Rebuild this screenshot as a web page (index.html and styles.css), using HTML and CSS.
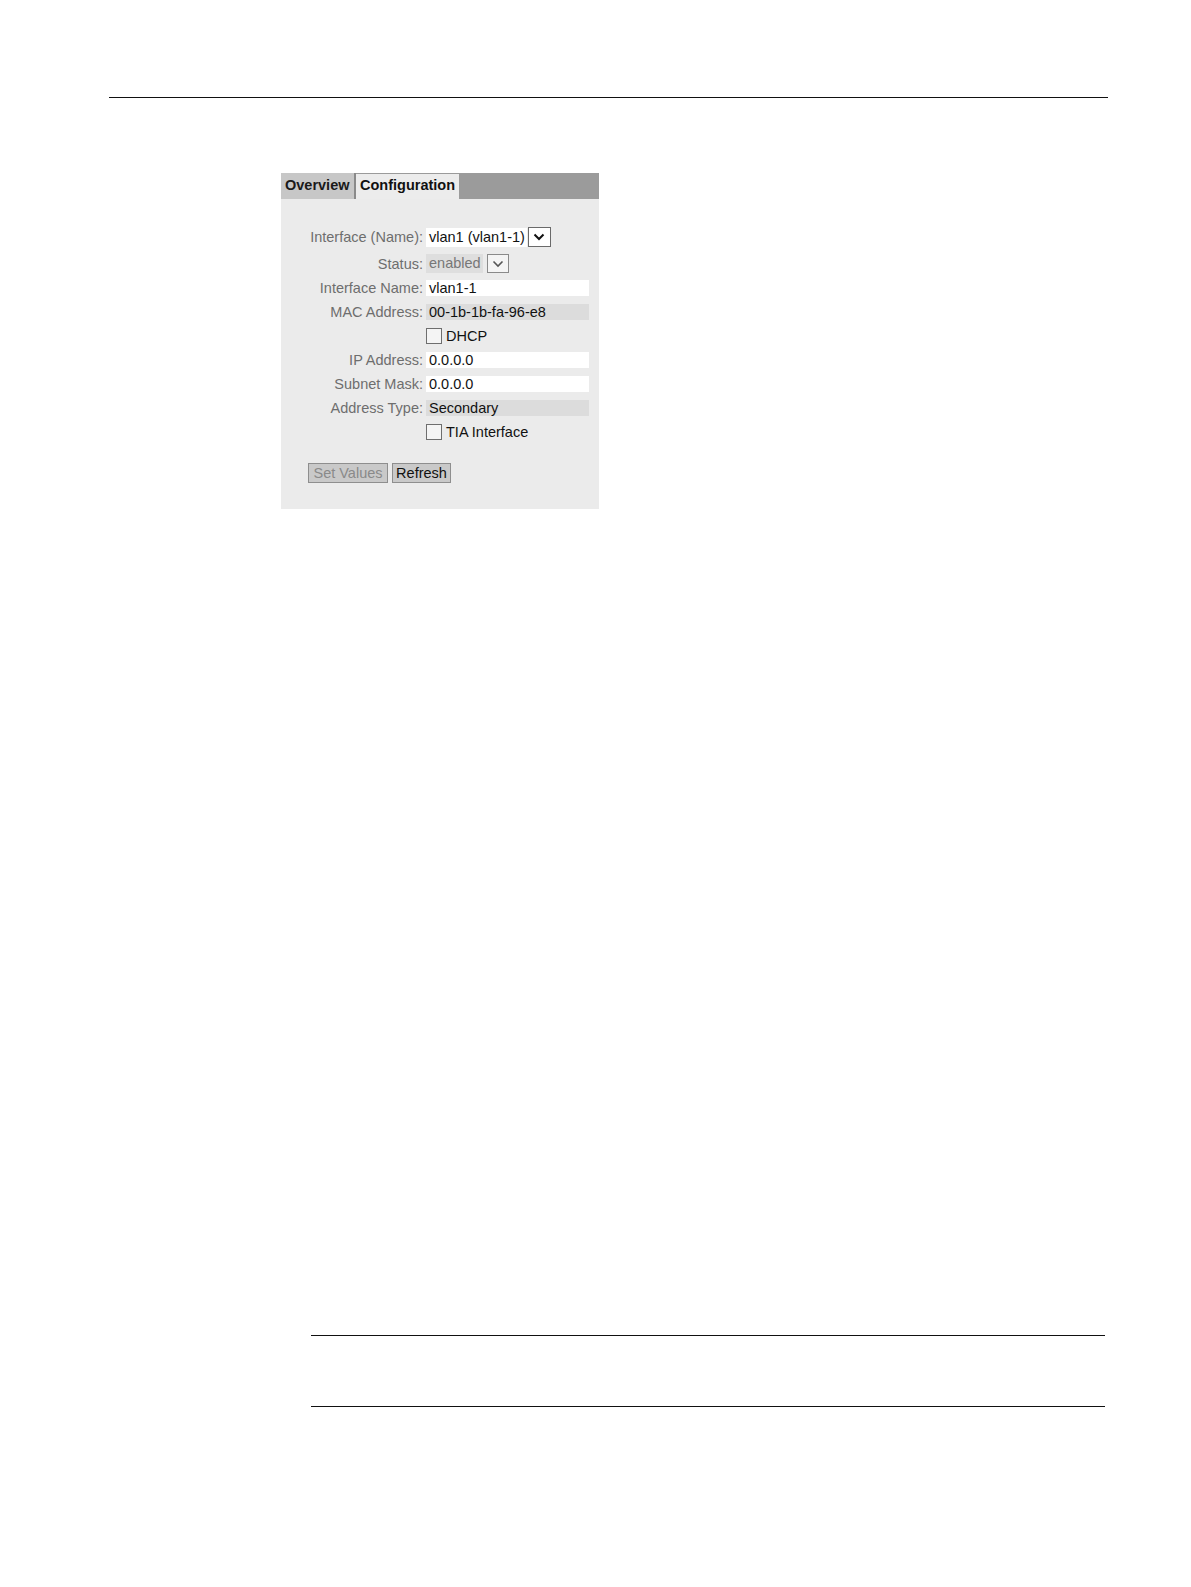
FILE: index.html
```html
<!DOCTYPE html>
<html>
<head>
<meta charset="utf-8">
<link rel="stylesheet" href="styles.css">
</head>
<body>
<div class="page">
  <div class="header-rule"></div>
  <div class="panel">
    <div class="tabs">
      <div class="tab tab-inactive">Overview</div>
      <div class="tab tab-active">Configuration</div>
    </div>
    <div class="form">
      <div class="label">Interface (Name):</div>
      <div class="value">
        <span class="select"><span class="select-text">vlan1 (vlan1-1)</span><span class="arrow"><svg width="12" height="8" viewBox="0 0 12 8"><path d="M1.5 1.5 L6 6 L10.5 1.5" fill="none" stroke="#111" stroke-width="2"/></svg></span></span>
      </div>
      <div class="label">Status:</div>
      <div class="value">
        <span class="select disabled"><span class="select-text">enabled</span><span class="arrow"><svg width="12" height="8" viewBox="0 0 12 8"><path d="M1.5 1.5 L6 6 L10.5 1.5" fill="none" stroke="#555" stroke-width="1.6"/></svg></span></span>
      </div>
      <div class="label">Interface Name:</div>
      <div class="value"><span class="field">vlan1-1</span></div>
      <div class="label">MAC Address:</div>
      <div class="value"><span class="field readonly">00-1b-1b-fa-96-e8</span></div>
      <div class="label"></div>
      <div class="value"><span class="check"><span class="box"></span>DHCP</span></div>
      <div class="label">IP Address:</div>
      <div class="value"><span class="field">0.0.0.0</span></div>
      <div class="label">Subnet Mask:</div>
      <div class="value"><span class="field">0.0.0.0</span></div>
      <div class="label">Address Type:</div>
      <div class="value"><span class="field readonly">Secondary</span></div>
      <div class="label"></div>
      <div class="value"><span class="check"><span class="box"></span>TIA Interface</span></div>
    </div>
    <div class="buttons">
      <span class="btn btn-disabled">Set Values</span>
      <span class="btn btn-refresh">Refresh</span>
    </div>
  </div>
  <div class="note">
    <div class="note-rule"></div>
    <div class="note-body"></div>
    <div class="note-rule"></div>
  </div>
</div>
</body>
</html>
```
FILE: styles.css
```css
html, body {
  margin: 0;
  padding: 0;
  background: #ffffff;
}
body {
  font-family: "Liberation Sans", Arial, sans-serif;
  font-size: 14.5px;
  color: #111;
}
.page {
  padding-top: 97px;
}
.header-rule {
  margin-left: 109px;
  width: 999px;
  height: 0;
  border-top: 1.6px solid #111;
}
.panel {
  margin-top: 75px;
  margin-left: 281px;
  width: 318px;
  height: 336px;
  background: #ebebeb;
  box-sizing: border-box;
}
.tabs {
  height: 26px;
  background: #9b9b9b;
  display: flex;
  align-items: flex-end;
}
.tab {
  height: 26px;
  box-sizing: border-box;
  font-weight: bold;
  padding: 4px 4px 0 4px;
  line-height: 16px;
}
.tab-inactive {
  width: 75px;
  background: #c7c7c7;
  border-right: 2px solid #8a8a8a;
  color: #1a1a1a;
}
.tab-active {
  width: 103px;
  height: 25px;
  background: #ececec;
  color: #111;
  padding-top: 3px;
}
.form {
  margin-top: 24px;
  display: grid;
  grid-template-columns: 142px 163px;
  column-gap: 3px;
  grid-template-rows: 28px 25px;
  grid-auto-rows: 24px;
}
.label {
  color: #6e6e6e;
  display: flex;
  align-items: center;
  justify-content: flex-end;
}
.value {
  display: flex;
  align-items: center;
}
.select {
  display: inline-flex;
  align-items: center;
}
.select-text {
  background: #fff;
  padding: 0 2px 0 3px;
  height: 19px;
  line-height: 19px;
  color: #111;
}
.arrow {
  width: 23px;
  height: 20px;
  box-sizing: border-box;
  border: 1px solid #6a6a6a;
  background: #fff;
  display: inline-flex;
  align-items: center;
  justify-content: center;
  margin-left: 1px;
}
.select.disabled .select-text {
  background: #dedede;
  color: #777;
}
.select.disabled .arrow {
  width: 22px;
  height: 19px;
  border-color: #8a8a8a;
  background: #f4f4f4;
  margin-left: 4px;
}
.field {
  display: block;
  width: 163px;
  height: 16px;
  line-height: 16px;
  background: #fff;
  padding-left: 3px;
  box-sizing: border-box;
  color: #111;
}
.field.readonly {
  background: #dcdcdc;
}
.check {
  display: inline-flex;
  align-items: center;
  color: #111;
}
.box {
  width: 16px;
  height: 16px;
  box-sizing: border-box;
  border: 1px solid #6e6e6e;
  background: #f4f4f4;
  margin-right: 4px;
}
.buttons {
  margin-top: 19px;
  margin-left: 27px;
  display: flex;
  gap: 4px;
}
.btn {
  display: inline-block;
  height: 20px;
  line-height: 18px;
  box-sizing: border-box;
  padding: 0 3px;
  background: #c9c9c9;
  border: 1px solid #8e8e8e;
  color: #111;
  text-align: center;
}
.btn-disabled {
  color: #8a8a8a;
  width: 80px;
}
.btn-refresh {
  width: 59px;
}
.note {
  margin-top: 826px;
  margin-left: 311px;
  width: 794px;
}
.note-rule {
  border-top: 1px solid #111;
}
.note-body {
  height: 70px;
}
```
